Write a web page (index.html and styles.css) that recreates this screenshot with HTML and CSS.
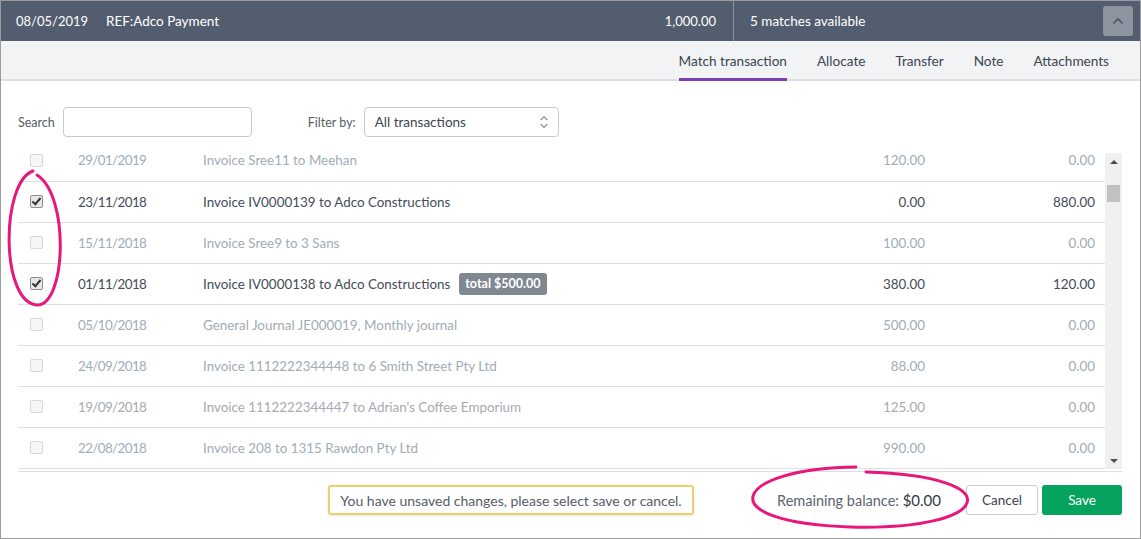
FILE: index.html
```html
<!DOCTYPE html>
<html lang="en">
<head>
  <meta charset="UTF-8" />
  <title>Match transaction</title>
  <link rel="stylesheet" href="styles.css">
</head>
<body>
<div class="frame">

  <!-- Bank line header -->
  <div class="bankline">
    <span class="bl-date">08/05/2019</span>
    <span class="bl-ref">REF:Adco Payment</span>
    <span class="bl-amount">1,000.00</span>
    <span class="bl-matches">5 matches available</span>
    <button class="bl-toggle">
      <svg width="12" height="8" viewBox="0 0 12 8"><path d="M1.5 6.5 L6 2 L10.5 6.5" fill="none" stroke="#4c5663" stroke-width="1.6"/></svg>
    </button>
  </div>

  <!-- Tabs -->
  <div class="tabs">
    <span class="tab active">Match transaction</span>
    <span class="tab">Allocate</span>
    <span class="tab">Transfer</span>
    <span class="tab">Note</span>
    <span class="tab">Attachments</span>
  </div>

  <div class="panel">
    <div class="filters">
      <label class="lbl">Search</label>
      <input type="text" class="search" />
      <label class="lbl filter-lbl">Filter by:</label>
      <div class="select">
        <span>All transactions</span>
        <svg width="10" height="14" viewBox="0 0 10 14"><path d="M1.5 5 L5 1.5 L8.5 5 M1.5 9 L5 12.5 L8.5 9" fill="none" stroke="#8a929b" stroke-width="1.2"/></svg>
      </div>
    </div>

    <div class="tablewrap">
      <div class="rows">
        <div class="row off"><span class="cb"></span><span class="date">29/01/2019</span><span class="desc">Invoice Sree11 to Meehan</span><span class="amt">120.00</span><span class="amt2">0.00</span></div>
        <div class="row"><span class="cb on"></span><span class="date">23/11/2018</span><span class="desc">Invoice IV0000139 to Adco Constructions</span><span class="amt">0.00</span><span class="amt2">880.00</span></div>
        <div class="row off"><span class="cb"></span><span class="date">15/11/2018</span><span class="desc">Invoice Sree9 to 3 Sans</span><span class="amt">100.00</span><span class="amt2">0.00</span></div>
        <div class="row"><span class="cb on"></span><span class="date">01/11/2018</span><span class="desc">Invoice IV0000138 to Adco Constructions <span class="badge">total $500.00</span></span><span class="amt">380.00</span><span class="amt2">120.00</span></div>
        <div class="row off"><span class="cb"></span><span class="date">05/10/2018</span><span class="desc">General Journal JE000019, Monthly journal</span><span class="amt">500.00</span><span class="amt2">0.00</span></div>
        <div class="row off"><span class="cb"></span><span class="date">24/09/2018</span><span class="desc">Invoice 1112222344448 to 6 Smith Street Pty Ltd</span><span class="amt">88.00</span><span class="amt2">0.00</span></div>
        <div class="row off"><span class="cb"></span><span class="date">19/09/2018</span><span class="desc">Invoice 1112222344447 to Adrian's Coffee Emporium</span><span class="amt">125.00</span><span class="amt2">0.00</span></div>
        <div class="row off"><span class="cb"></span><span class="date">22/08/2018</span><span class="desc">Invoice 208 to 1315 Rawdon Pty Ltd</span><span class="amt">990.00</span><span class="amt2">0.00</span></div>
      </div>
      <div class="scrollbar">
        <span class="arrow up"></span>
        <span class="thumb"></span>
        <span class="arrow down"></span>
      </div>
    </div>

    <div class="footer">
      <div class="unsaved">You have unsaved changes, please select save or cancel.</div>
      <div class="remaining">Remaining balance: <b>$0.00</b></div>
      <button class="btn cancel">Cancel</button>
      <button class="btn save">Save</button>
    </div>
  </div>

  <!-- hand drawn highlights -->
  <svg class="marks" width="1141" height="539" viewBox="0 0 1141 539">
    <path d="M33 171 C 1 182, 0 302, 37 305 C 66 306, 70 196, 37 175" fill="none" stroke="#e8177b" stroke-width="3" stroke-linecap="round"/>
    <path d="M856 467 C 735 468, 705 522, 850 527 C 995 531, 1012 476, 866 472" fill="none" stroke="#e8177b" stroke-width="3" stroke-linecap="round"/>
  </svg>
</div>
</body>
</html>
```

FILE: styles.css
```css
body {
  margin: 0;
  font-family: Lato, "Open Sans", sans-serif;
  color: #3c4550;
}

.frame {
  position: relative;
  width: 1141px;
  height: 539px;
  box-sizing: border-box;
  border: 1px solid #9c9c9c;
  display: flex;
  flex-direction: column;
  overflow: hidden;
}

/* header */
.bankline {
  height: 40px;
  background: #525e6f;
  color: #fff;
  display: flex;
  align-items: center;
  font-size: 13px;
}

.bl-date {
  margin-left: 15px;
  width: 90px;
}

.bl-ref {
  flex: 1;
  font-size: 13.5px;
}

.bl-amount {
  padding-right: 17px;
  align-self: stretch;
  display: flex;
  align-items: center;
  border-right: 1px solid #8a939e;
}

.bl-matches {
  margin-left: 16px;
  width: 353px;
  font-size: 13.5px;
}

.bl-toggle {
  width: 30px;
  height: 30px;
  margin-right: 7px;
  border: none;
  border-radius: 3px;
  background: #8b949f;
  display: flex;
  align-items: center;
  justify-content: center;
  padding: 0;
}

/* tabs */
.tabs {
  height: 38px;
  background: #f2f3f5;
  border-bottom: 2px solid #dddfe3;
  display: flex;
  justify-content: flex-end;
  padding-right: 31px;
  gap: 30px;
}

.tab {
  font-size: 13.6px;
  line-height: 40px;
  color: #3c4550;
  position: relative;
}

.tab.active::after {
  content: "";
  position: absolute;
  left: 0;
  right: 0;
  bottom: -2px;
  height: 3px;
  background: #7b3faf;
}

/* panel */
.panel {
  flex: 1;
  padding: 26px 18px 0 17px;
}

.filters {
  display: flex;
  align-items: center;
  height: 30px;
}

.lbl {
  font-size: 12.5px;
  color: #555d66;
}

.search {
  margin-left: 8px;
  width: 189px;
  height: 30px;
  box-sizing: border-box;
  border: 1px solid #c5cad0;
  border-radius: 4px;
}

.filter-lbl {
  margin-left: 56px;
}

.select {
  margin-left: 8px;
  width: 195px;
  height: 30px;
  box-sizing: border-box;
  border: 1px solid #c5cad0;
  border-radius: 4px;
  display: flex;
  align-items: center;
  justify-content: space-between;
  padding: 0 9px 0 10px;
  font-size: 13.5px;
  color: #3c4550;
}

/* table */
.tablewrap {
  margin-top: 3px;
  display: flex;
  border-bottom: 1px solid #dcdfe3;
  padding-bottom: 2px;
}

.rows {
  flex: 1;
  border-bottom: 1px solid #dcdfe3;
}

.row {
  height: 41px;
  display: flex;
  align-items: center;
  font-size: 13.4px;
  color: #434c57;
  border-top: 1px solid #dcdfe3;
  box-sizing: border-box;
  padding-bottom: 1px;
}

.row:first-child {
  border-top: none;
}

.row.off {
  color: #a3abb3;
}

.cb {
  width: 11px;
  height: 11px;
  border: 1px solid #d7d9dc;
  border-radius: 2px;
  background: #f6f6f6;
  margin-left: 12px;
  margin-right: 35px;
  position: relative;
}

.cb.on {
  border-color: #8f8f8f;
  background: #e7e7e7;
}

.cb.on::after {
  content: "";
  position: absolute;
  left: 3px;
  top: 0px;
  width: 3px;
  height: 7px;
  border: solid #333;
  border-width: 0 2px 2px 0;
  transform: rotate(40deg);
}

.date {
  width: 125px;
  letter-spacing: -0.6px;
}

.desc {
  flex: 1;
  display: flex;
  align-items: center;
}

.badge {
  margin-left: 9px;
  background: #7f8791;
  color: #fff;
  font-size: 12.5px;
  font-weight: bold;
  padding: 3px 6px;
  line-height: 16px;
  border-radius: 3px;
}

.amt {
  width: 120px;
  text-align: right;
}

.amt2 {
  width: 170px;
  text-align: right;
  padding-right: 10px;
}

.scrollbar {
  width: 17px;
  margin-top: 13px;
  background: #f0f0f0;
  position: relative;
}

.thumb {
  position: absolute;
  left: 2px;
  top: 32px;
  width: 13px;
  height: 17px;
  background: #c1c1c1;
}

.arrow {
  position: absolute;
  left: 5px;
  width: 0;
  height: 0;
  border-left: 4px solid transparent;
  border-right: 4px solid transparent;
}

.arrow.up {
  top: 7px;
  border-bottom: 4px solid #505050;
}

.arrow.down {
  bottom: 6px;
  border-top: 4px solid #505050;
}

/* footer */
.footer {
  display: flex;
  align-items: center;
  margin-top: 13px;
  height: 30px;
}

.unsaved {
  margin-left: 310px;
  width: 366px;
  height: 30px;
  box-sizing: border-box;
  border: 2px solid #ebd06c;
  border-radius: 3px;
  font-size: 14px;
  color: #555d66;
  display: flex;
  align-items: center;
  justify-content: center;
  box-shadow: 0 1px 3px rgba(0, 0, 0, 0.1);
}

.remaining {
  margin-left: auto;
  font-size: 14.5px;
  color: #5b6570;
}

.remaining b {
  font-weight: normal;
  color: #2f3944;
  font-size: 15px;
}

.btn {
  height: 30px;
  border-radius: 3px;
  font-family: inherit;
  font-size: 13.5px;
}

.cancel {
  margin-left: 25px;
  width: 72px;
  border: 1px solid #c8ccd1;
  background: #fff;
  color: #3c4550;
}

.save {
  margin-left: 4px;
  width: 80px;
  border: none;
  background: #05a35d;
  color: #fff;
}

.marks {
  position: absolute;
  left: -1px;
  top: -1px;
  pointer-events: none;
}
```
